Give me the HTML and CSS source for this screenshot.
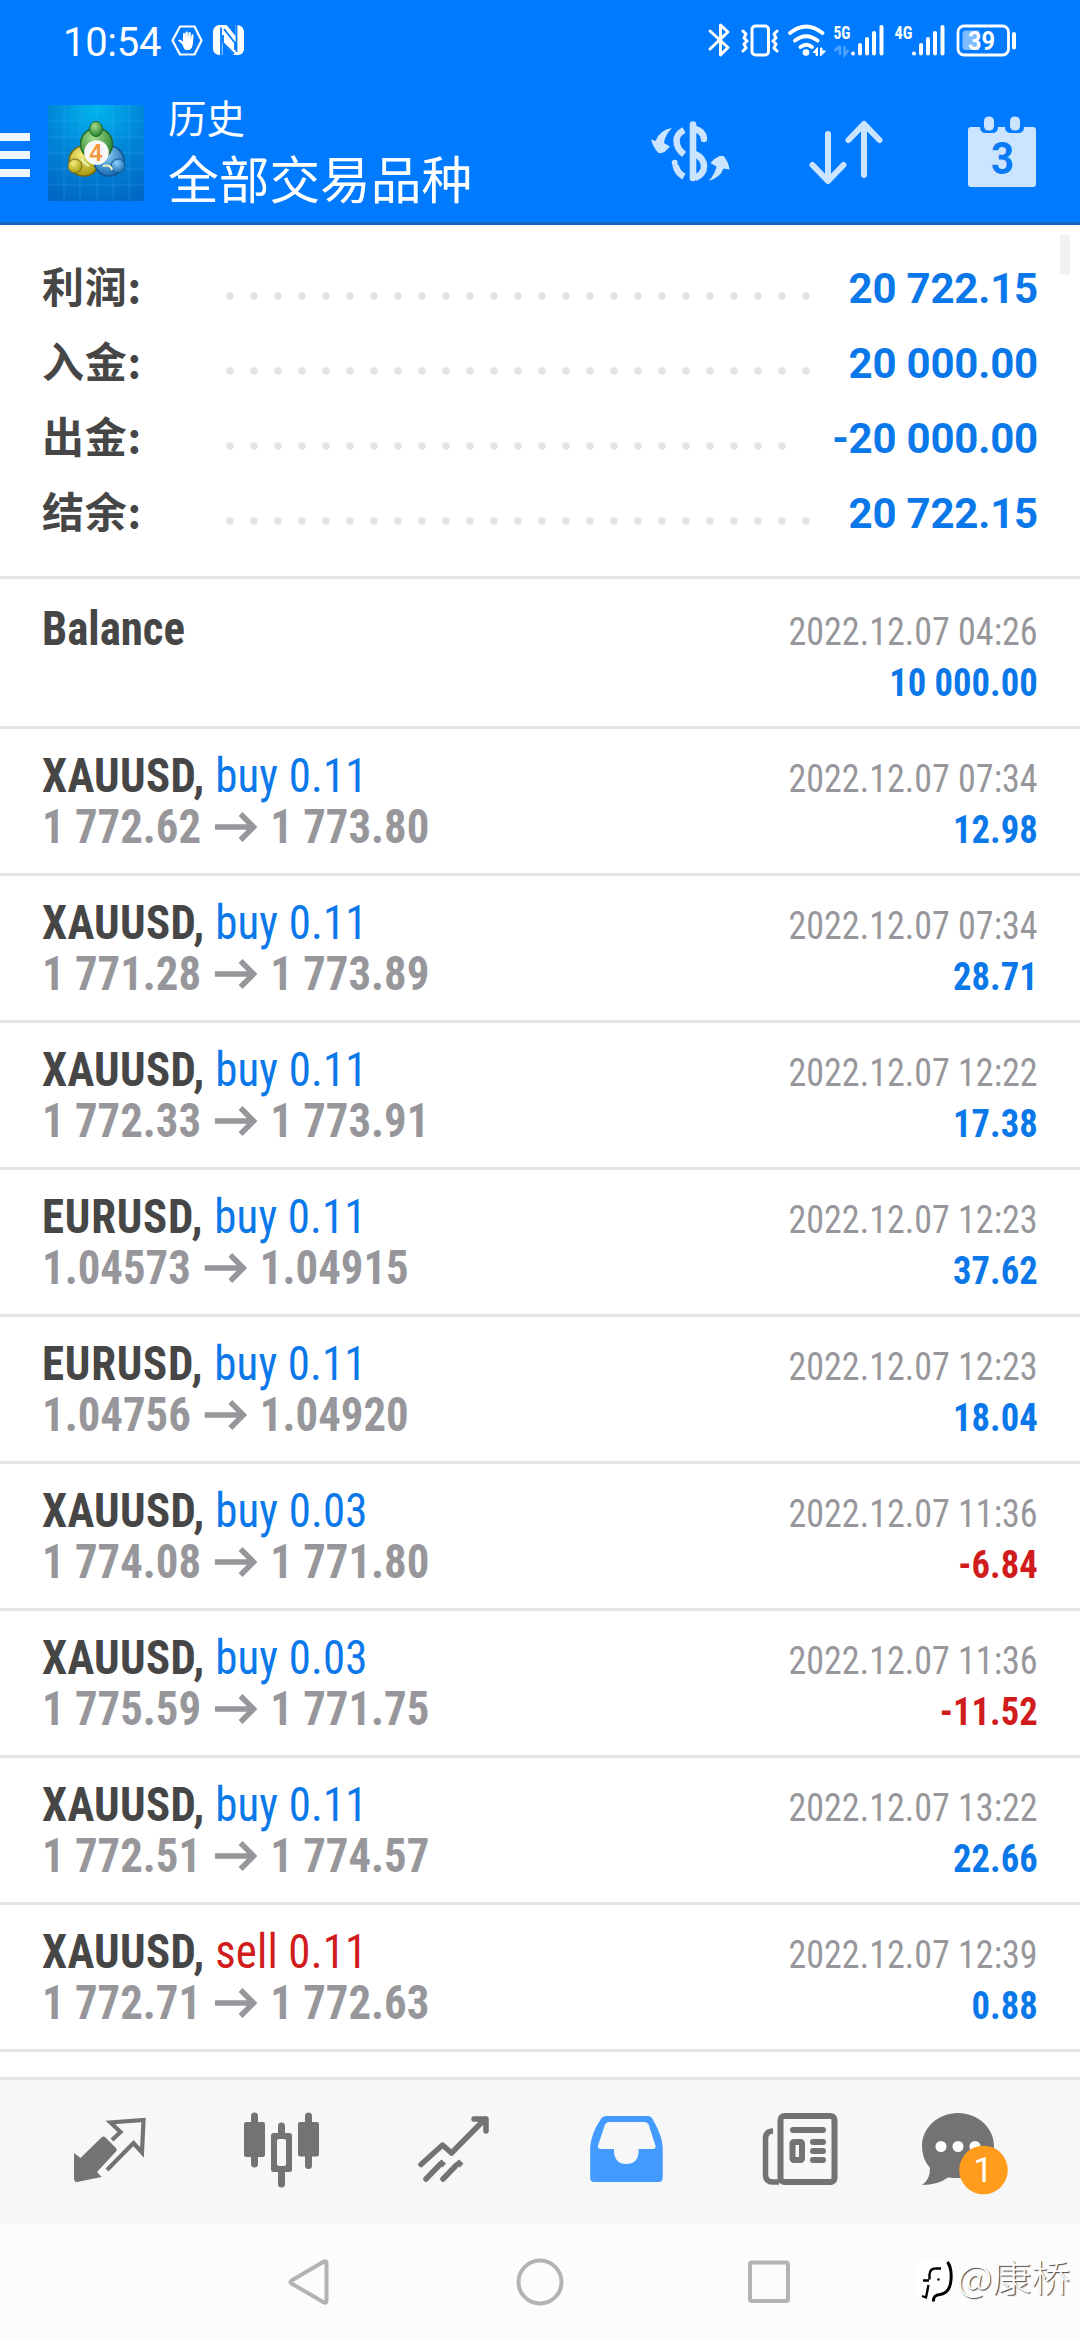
FILE: index.html
```html
<!DOCTYPE html>
<html lang="zh-CN">
<head>
<meta charset="utf-8">
<title>历史</title>
<link rel="stylesheet" href="styles.css">
</head>
<body>
<div class="screen">
  <div class="statusbar">
    <span class="clock">10:54</span>
    <svg class="status-left" width="80" height="40" viewBox="168 20 80 40">
      <path d="M180 26.500h14.500l7 14-7 14H180l-7.500-14z" fill="none" stroke="#fff" stroke-width="2.200" stroke-linejoin="round"/>
      <path d="M182 44l-4-3.500c1-1.500 2.500-1 5 1V34c0-1.500 2.200-1.500 2.200 0v5l.3-6.500c0-1.500 2.300-1.500 2.300 0l.2 6.500.5-6c.2-1.500 2.300-1.300 2.200.2v6l.8-4c.3-1.400 2.200-1 2 .5-.3 4-.3 6-.8 9-.5 3-1.700 4.500-3.500 5.300h-4c-1.200-1.500-2-3.500-3.200-6z" fill="#fff"/>
      <path d="M219 25h7l1.500 1 8 10V25l4 .5c3 1 4 3 4.500 6v18c-.5 3-2 5-5.500 5.500h-5l-11-12v12h-4c-3-.5-5-2.500-5.500-5.500V31c.5-3 2.500-5.500 6-6z" fill="#fff"/>
      <path d="M221 27.500V55M236.500 25V52M224 29l11 14v7M223 35v8l11 11" fill="none" stroke="#007aff" stroke-width="1.800"/>
    </svg>
    <svg class="status-right" width="320" height="40" viewBox="704 20 320 40">
      <g fill="none" stroke="#fff" stroke-width="3" stroke-linejoin="round" stroke-linecap="round">
        <path d="M710 31l18 16.500-7.500 7.500V25l7.500 7-18 17"/>
        <rect x="752" y="26" width="16.500" height="29" rx="3.500"/>
        <path d="M743 31l3 3-2 4 3 3-3 3 2 4-3 3M777 31l-3 3 2 4-3 3 3 3-2 4 3 3"/>
        <path d="M790 33q16-13 32.500 0M795 40.500q11-8.500 22.500 0M800.500 47q6-4.500 11.500 0" stroke-width="3.800"/>
      </g>
      <circle cx="806" cy="52.500" r="3.300" fill="#fff"/>
      <path d="M817.500 47.500v8h-1.500v-3h-3zM820.500 56v-8h1.500v3h3.500z" fill="#fff" stroke="#fff"/>
      <path d="M840 46v9M834.500 51l5.500-5M844.500 46v9l4-5" stroke="#4ca2ff" stroke-width="2.500" fill="none"/>
      <g stroke="#fff" stroke-width="4" stroke-linecap="round">
        <path d="M853 53.500v0M860 45v8.500M867 39v14.500M874 33v20.500M881.500 27v26.500"/>
        <path d="M914 53.500v0M921 45v8.500M928 39v14.500M935 33v20.500M942.500 27v26.500"/>
      </g>
      <text x="833.500" y="38.500" textLength="17" lengthAdjust="spacingAndGlyphs" class="net">5G</text>
      <text x="894.500" y="38.500" textLength="18" lengthAdjust="spacingAndGlyphs" class="net">4G</text>
      <rect x="958" y="26" width="50.500" height="29" rx="6" fill="none" stroke="#fff" stroke-width="2.800"/>
      <path d="M966 30.500h13v19.500h-13q-3.500 0-3.500-3.500V34q0-3.500 3.500-3.500z" fill="#7fbcff"/>
      <rect x="1012" y="32" width="4" height="17.500" rx="2" fill="#fff"/>
      <text x="968" y="49.500" textLength="27" lengthAdjust="spacingAndGlyphs" class="batt">39</text>
    </svg>
  </div>

  <div class="appbar">
    <svg class="menu" width="30" height="44" viewBox="0 133 30 44"><path d="M0 133h30v8H0zM0 151h30v8H0zM0 169h30v8H0z" fill="#eef7ff"/></svg>
    <svg class="logo" width="96" height="96" viewBox="48 105 96 96">
      <defs>
        <radialGradient id="sky" cx=".5" cy=".05" r="1"><stop offset="0" stop-color="#00b4ee"/><stop offset=".5" stop-color="#0086d8"/><stop offset="1" stop-color="#0068c4"/></radialGradient>
        <radialGradient id="gr" cx=".4" cy=".3" r=".7"><stop offset="0" stop-color="#a5dc90"/><stop offset="1" stop-color="#27842c"/></radialGradient>
        <radialGradient id="ye" cx=".4" cy=".3" r=".7"><stop offset="0" stop-color="#f3ea7c"/><stop offset="1" stop-color="#a89a10"/></radialGradient>
        <radialGradient id="bl" cx=".4" cy=".3" r=".7"><stop offset="0" stop-color="#8fd0f6"/><stop offset="1" stop-color="#1769b4"/></radialGradient>
        <symbol id="arrow" viewBox="0 0 43 30" preserveAspectRatio="none"><path d="M0 15h39M26 2l13 13-13 13"/></symbol>
      </defs>
      <path d="M48 105h96v96H48z" fill="url(#sky)"/>
      <path d="M64 105v96M80 105v96M97 105v96M113 105v96M129 105v96M48 121h96M48 137h96M48 153h96M48 169h96M48 185h96" stroke="#4fb8ee" stroke-opacity=".25" fill="none"/>
      <circle cx="84" cy="161" r="15" fill="url(#ye)" stroke="#776c16" stroke-width="1.500"/>
      <circle cx="109" cy="161" r="15" fill="url(#bl)" stroke="#15558f" stroke-width="1.500"/>
      <circle cx="96.500" cy="144" r="16" fill="url(#gr)" stroke="#216727" stroke-width="1.500"/>
      <ellipse cx="96" cy="129" rx="6.500" ry="7.500" fill="url(#gr)" stroke="#216727"/>
      <circle cx="75" cy="166" r="7" fill="url(#ye)" stroke="#776c16"/>
      <circle cx="118" cy="166" r="7" fill="url(#bl)" stroke="#15558f"/>
      <path d="M89 166q-7-4-7-8M103 166q8-2 9 4" stroke="#e8f4c0" stroke-width="2" fill="none"/>
      <circle cx="96.500" cy="152.500" r="12.300" fill="#f7f7f7"/>
      <text x="96" y="160.500" class="four">4</text>
    </svg>
    <div class="titles">
      <div class="title-small">历史</div>
      <div class="title-large">全部交易品种</div>
    </div>
    <svg class="actions" width="400" height="80" viewBox="645 111 400 80">
      <g fill="none" stroke="#cbe4ff" stroke-width="6.500">
        <path d="M693 124.500v53.500" stroke-width="6.600" stroke-linecap="round"/>
        <path d="M684 130q-7.500 4-7.500 10.500 0 8 7.500 14M684 176.500q-7-3.500-8.500-11.500"/>
        <circle cx="674.700" cy="162.800" r="3" fill="#cbe4ff" stroke="none"/>
        <path d="M695 129q8 2 9 9.500M695 154q9 4 9 12.500 0 7.500-9 11.500"/>
        <circle cx="704" cy="139" r="3.200" fill="#cbe4ff" stroke="none"/>
      </g>
      <path d="M672 128q-7 7-8 15l6 3.500-5.500 5.500q-3 1.500-6 1-5-5-7.500-13.500l4.500 1.500q4-11 16.500-13zM708.500 181q6-6 8-14.500l-6-3.500q4-5 9-7h4q5 5.500 6 13.500l-6-1q-3 9-15 12.500z" fill="#cbe4ff"/>
      <g fill="none" stroke="#cbe4ff" stroke-width="6" stroke-linecap="round" stroke-linejoin="round">
        <path d="M828 134v46M812.500 165l15.500 16 15.500-16M864 175v-50M848.500 140l15.500-16 15.500 16"/>
      </g>
      <path d="M971 127h9q0 6 6 6h6q6 0 6-6h7q0 6 6 6h7q6 0 6-6h9q3 0 3 3v54q0 3-3 3h-62q-3 0-3-3v-54q0-3 3-3z" fill="#cde4ff"/>
      <rect x="984" y="116.500" width="10" height="14" rx="4.500" fill="#cde4ff"/>
      <rect x="1010" y="116.500" width="10" height="14" rx="4.500" fill="#cde4ff"/>
      <text x="991" y="174" textLength="23" lengthAdjust="spacingAndGlyphs" class="day">3</text>
    </svg>
  </div>

  <main class="content">
    <div class="scroll-thumb"></div>
    <section class="summary">
      <div class="sum-row"><span class="sum-label">利润:</span><span class="leader"></span><span class="sum-value">20 722.15</span></div>
      <div class="sum-row"><span class="sum-label">入金:</span><span class="leader"></span><span class="sum-value">20 000.00</span></div>
      <div class="sum-row"><span class="sum-label">出金:</span><span class="leader leader-short"></span><span class="sum-value">-20 000.00</span></div>
      <div class="sum-row"><span class="sum-label">结余:</span><span class="leader"></span><span class="sum-value">20 722.15</span></div>
    </section>
    <div class="deal deal-balance"><div class="deal-main"><div class="sym">Balance</div></div><div class="deal-side"><div class="date">2022.12.07 04:26</div><div class="pl">10 000.00</div></div></div>
    <div class="deal"><div class="deal-main"><div class="sym">XAUUSD, <span class="buy">buy 0.11</span></div><div class="price">1 772.62 <svg class="arrow"><use href="#arrow"/></svg> 1 773.80</div></div><div class="deal-side"><div class="date">2022.12.07 07:34</div><div class="pl">12.98</div></div></div>
    <div class="deal"><div class="deal-main"><div class="sym">XAUUSD, <span class="buy">buy 0.11</span></div><div class="price">1 771.28 <svg class="arrow"><use href="#arrow"/></svg> 1 773.89</div></div><div class="deal-side"><div class="date">2022.12.07 07:34</div><div class="pl">28.71</div></div></div>
    <div class="deal"><div class="deal-main"><div class="sym">XAUUSD, <span class="buy">buy 0.11</span></div><div class="price">1 772.33 <svg class="arrow"><use href="#arrow"/></svg> 1 773.91</div></div><div class="deal-side"><div class="date">2022.12.07 12:22</div><div class="pl">17.38</div></div></div>
    <div class="deal"><div class="deal-main"><div class="sym sym-eur">EURUSD, <span class="buy">buy 0.11</span></div><div class="price">1.04573 <svg class="arrow"><use href="#arrow"/></svg> 1.04915</div></div><div class="deal-side"><div class="date">2022.12.07 12:23</div><div class="pl">37.62</div></div></div>
    <div class="deal"><div class="deal-main"><div class="sym sym-eur">EURUSD, <span class="buy">buy 0.11</span></div><div class="price">1.04756 <svg class="arrow"><use href="#arrow"/></svg> 1.04920</div></div><div class="deal-side"><div class="date">2022.12.07 12:23</div><div class="pl">18.04</div></div></div>
    <div class="deal"><div class="deal-main"><div class="sym">XAUUSD, <span class="buy">buy 0.03</span></div><div class="price">1 774.08 <svg class="arrow"><use href="#arrow"/></svg> 1 771.80</div></div><div class="deal-side"><div class="date">2022.12.07 11:36</div><div class="pl loss">-6.84</div></div></div>
    <div class="deal"><div class="deal-main"><div class="sym">XAUUSD, <span class="buy">buy 0.03</span></div><div class="price">1 775.59 <svg class="arrow"><use href="#arrow"/></svg> 1 771.75</div></div><div class="deal-side"><div class="date">2022.12.07 11:36</div><div class="pl loss">-11.52</div></div></div>
    <div class="deal"><div class="deal-main"><div class="sym">XAUUSD, <span class="buy">buy 0.11</span></div><div class="price">1 772.51 <svg class="arrow"><use href="#arrow"/></svg> 1 774.57</div></div><div class="deal-side"><div class="date">2022.12.07 13:22</div><div class="pl">22.66</div></div></div>
    <div class="deal"><div class="deal-main"><div class="sym">XAUUSD, <span class="sell">sell 0.11</span></div><div class="price">1 772.71 <svg class="arrow"><use href="#arrow"/></svg> 1 772.63</div></div><div class="deal-side"><div class="date">2022.12.07 12:39</div><div class="pl">0.88</div></div></div>
  </main>

  <nav class="tabs">
    <svg class="tab" viewBox="24 2080 172 144">
      <path d="M102 2137q1.500-1 3 0l11 11q1.500 1.500 0 3.500l-19 20.500 4.500 5-24.500 5q-2.500 0-3-2.500v-26.500l6.500 5z" fill="#737373"/>
      <path d="M112 2140l8.500-8-10-9.500 33-2.500-1.500 32.500-8.500-9.500-26.500 27" fill="none" stroke="#737373" stroke-width="4.200"/>
    </svg>
    <svg class="tab" viewBox="196 2080 172 144">
      <path d="M254.500 2116v48M308.500 2116v49.500M281.500 2126v58" stroke="#737373" stroke-width="7" stroke-linecap="round"/>
      <rect x="244" y="2122" width="21" height="35" rx="2" fill="#737373"/>
      <rect x="298" y="2122" width="21" height="34.500" rx="2" fill="#737373"/>
      <rect x="271" y="2133" width="21" height="39" rx="2.500" fill="#737373"/>
      <rect x="277" y="2139" width="9" height="27" rx="2" fill="#f7f7f7"/>
    </svg>
    <svg class="tab" viewBox="368 2080 172 144">
      <g fill="none" stroke="#737373" stroke-width="5.500" stroke-linecap="round" stroke-linejoin="round">
        <path d="M421 2164.500l21.500-19.500 9 8 33.500-34M474 2119h12v12"/>
        <path d="M426 2179l13-13.500M443 2179l13-13.500"/>
      </g>
      <path d="M437.500 2163l4-3.500 4.500 4-3.500 4zM455 2163l4-3.500 4.500 4-3.500 4z" fill="#737373"/>
    </svg>
    <svg class="tab" viewBox="540 2080 172 144">
      <path fill-rule="evenodd" d="M606 2116h42q3 0 4.500 3 9.500 16 10.200 28v31q0 4-4 4h-64.500q-4 0-4-4v-31q1-14 11-28.500 1.500-2.500 4.800-2.500zM609 2122q-3 0-4 2.500l-7 21q-.5 3.500 2.500 3.500h13.500v3q1 12 12.300 12 11.500 0 12.300-12v-3h14q3.500 0 3-3l-7-21.500q-1-2.500-4-2.500z" fill="#439aff"/>
    </svg>
    <svg class="tab" viewBox="712 2080 172 144">
      <g fill="none" stroke="#737373">
        <rect x="780.500" y="2116" width="54" height="66" rx="4" stroke-width="6"/>
        <path d="M773 2131q-7.500 0-7.500 8v36q0 7 7.500 7h6" stroke-width="5.500"/>
        <rect x="792.500" y="2142" width="9.500" height="18" rx="1.500" stroke-width="6"/>
        <path d="M793 2130h30M813 2142h10M813 2151h10M813 2160h10" stroke-width="6" stroke-linecap="round"/>
      </g>
    </svg>
    <svg class="tab" viewBox="884 2080 172 144">
      <path d="M958 2113c20 0 36 15 36 33s-14 32-34 32q-6 0-12-.5-10 7.500-26 7.500 8-5 8-17-8-9-8-22c0-18 16-33 36-33z" fill="#737373"/>
      <circle cx="941" cy="2146.500" r="5.500" fill="#fff"/><circle cx="958" cy="2146.500" r="5.500" fill="#fff"/><circle cx="975" cy="2146.500" r="5.500" fill="#fff"/>
      <circle cx="983.500" cy="2170" r="24.300" fill="#ff9c1b"/>
      <text x="983" y="2182" class="badge">1</text>
    </svg>
  </nav>

  <footer class="sysnav">
    <svg width="1080" height="116" viewBox="0 2224 1080 116">
      <g fill="none" stroke="#b3b3b3" stroke-width="4" stroke-linejoin="round">
        <path d="M291.500 2280.500q-2 1.500 0 3l32.500 19q2.500 1 2.500-1.500v-38q0-2.500-2.500-1.500z"/>
        <circle cx="540" cy="2282" r="21.500"/>
        <rect x="750" y="2262.500" width="38" height="38.500" rx="2"/>
      </g>
      <rect x="914" y="2260" width="38" height="38" rx="13" fill="#fff"/>
      <g fill="none" stroke="#000">
        <path d="M941 2268.500h-5.500q-5.500 0-6 6v5M923 2280.500h6M928.500 2285l-2.500 12.500-4-1.500" stroke-width="2.400"/>
        <path d="M947.500 2262q4.500 6 3.500 18-1 13-11 14.500-7 .5-6.500 7" stroke-width="3"/>
      </g>
      <circle cx="938.500" cy="2279.500" r="1.200"/>
      <text x="957" y="2291.500" textLength="113" lengthAdjust="spacingAndGlyphs" class="mark">@康桥</text>
    </svg>
  </footer>
</div>
</body>
</html>
```
FILE: styles.css
```css
* { box-sizing: border-box; }
body { margin: 0; }
.screen {
  width: 1080px; height: 2340px; overflow: hidden;
  display: flex; flex-direction: column;
  background: #fff;
  font-family: Roboto, "Noto Sans CJK SC", sans-serif;
}
svg { display: block; flex: none; }

.statusbar {
  height: 80px; flex: none; background: #007aff; color: #fff;
  display: flex; align-items: flex-start; padding: 20px 56px 0 63px;
}
.clock { width: 105px; font-size: 40px; line-height: 45px; font-weight: 450; letter-spacing: -.3px; }
.status-right { margin-left: auto; }
.net { font: 700 18.500px "Roboto Condensed", sans-serif; fill: #fff; }
.batt { font: 700 25px Roboto, sans-serif; fill: #fff; }

.appbar {
  height: 145px; flex: none; background: #007aff; color: #fff;
  border-bottom: 3px solid #1766bd;
  display: flex; align-items: flex-start;
}
.menu { margin-top: 53px; }
.logo { margin: 25px 0 0 18px; }
.four { font: 700 23px "Liberation Sans", sans-serif; fill: #f59a3c; text-anchor: middle; }
.titles { margin: 8px 0 0 24px; font-family: "Noto Sans CJK SC", sans-serif; }
.title-small { font-size: 38.500px; line-height: 56px; }
.title-large { font-size: 50.700px; line-height: 66px; white-space: nowrap; }
.actions { margin: 31px 35px 0 auto; }
.day { font: 700 45px Roboto, sans-serif; fill: #0a7bf5; }

.content { position: relative; height: 1852px; flex: none; }
.scroll-thumb { position: absolute; left: 1060px; top: 10px; width: 10px; height: 40px; background: #f2f2f2; }
.summary { height: 354px; padding: 26px 42px 0; border-bottom: 3px solid #e4e4e4; }
.sum-row { display: flex; align-items: flex-start; height: 75px; line-height: 75px; font-size: 42px; font-weight: 700; }
.sum-label { width: 176px; color: #464646; font-family: "Noto Sans CJK SC", sans-serif; line-height: 67px; letter-spacing: .8px; }
.leader {
  width: 600px; height: 8px; margin-top: 41px;
  background: radial-gradient(circle at center, #e4e4e4 3.400px, transparent 4.200px) 0 0 / 24px 8px repeat-x;
}
.leader-short { width: 576px; }
.sum-value { margin-left: auto; color: #0b78ea; letter-spacing: -.2px; }

.deal {
  height: 147px; padding: 21px 42px 0; border-bottom: 3px solid #e4e4e4;
  display: flex; justify-content: space-between;
  font-family: "Roboto Condensed", sans-serif; line-height: 51px; white-space: nowrap;
}
.deal-balance { height: 150px; padding-top: 24px; }
.sym, .price { font-size: 48px; font-weight: 700; transform-origin: left center; }
.sym { color: #464646; letter-spacing: .3px; transform: scaleX(.935); }
.sym-eur { letter-spacing: .8px; }
.deal-balance .sym { letter-spacing: 0; }
.price { display: flex; align-items: center; gap: 14px; color: #97979b; transform: scaleX(.933); }
.buy, .sell { font-weight: 400; letter-spacing: .15px; }
.buy { color: #0b78ea; }
.sell { color: #d01c1c; }
.arrow { width: 46px; height: 30px; fill: none; stroke: #97979b; stroke-width: 5.500px; }
.deal-side { padding-top: 4px; text-align: right; font-size: 39px; }
.date, .pl { transform-origin: right center; }
.date { color: #97979b; transform: scaleX(.924); }
.pl { font-weight: 700; color: #0b78ea; transform: scaleX(.938); }
.loss { color: #d01c1c; }

.tabs { height: 147px; flex: none; padding-left: 24px; background: #f7f7f7; border-top: 3px solid #e4e4e4; display: flex; }
.tab { width: 172px; height: 144px; }
.badge { font: 400 35px Roboto, sans-serif; fill: #fff; text-anchor: middle; }
.sysnav { height: 116px; flex: none; background: #fcfcfc; }
.mark { font: 300 37px "Noto Sans CJK SC", sans-serif; fill: #fff; text-shadow: 1px 1px 1px #444; }
```
